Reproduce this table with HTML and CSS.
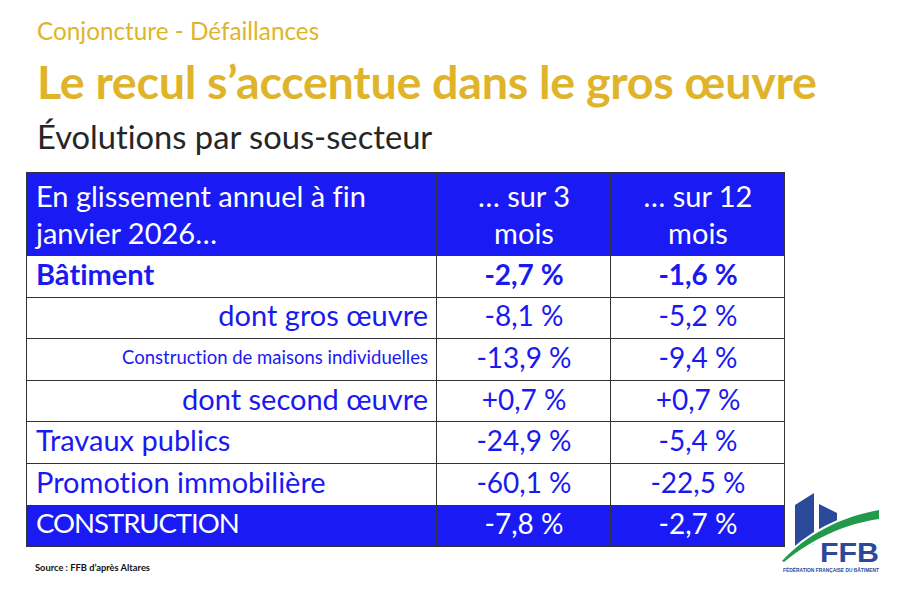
FILE: index.html
```html
<!DOCTYPE html>
<html lang="fr">
<head>
<meta charset="utf-8">
<title>Conjoncture - Défaillances</title>
<link rel="stylesheet" href="styles.css">
</head>
<body>
<div class="slide">
  <header class="head">
    <div class="kicker">Conjoncture - Défaillances</div>
    <h1 class="title">Le recul s’accentue dans le gros œuvre</h1>
    <h2 class="subtitle">Évolutions par sous-secteur</h2>
  </header>
  <table class="data">
    <colgroup>
      <col class="c1"><col class="c2"><col class="c3">
    </colgroup>
    <thead>
      <tr class="hdr">
        <th class="lab">En glissement annuel à fin janvier 2026…</th>
        <th class="num">… sur 3<br>mois</th>
        <th class="num">… sur 12<br>mois</th>
      </tr>
    </thead>
    <tbody>
      <tr class="bold">
        <td class="lab">Bâtiment</td><td class="num">-2,7 %</td><td class="num">-1,6 %</td>
      </tr>
      <tr>
        <td class="lab right">dont gros œuvre</td><td class="num">-8,1 %</td><td class="num">-5,2 %</td>
      </tr>
      <tr>
        <td class="lab right small">Construction de maisons individuelles</td><td class="num">-13,9 %</td><td class="num">-9,4 %</td>
      </tr>
      <tr>
        <td class="lab right">dont second œuvre</td><td class="num">+0,7 %</td><td class="num">+0,7 %</td>
      </tr>
      <tr>
        <td class="lab">Travaux publics</td><td class="num">-24,9 %</td><td class="num">-5,4 %</td>
      </tr>
      <tr>
        <td class="lab">Promotion immobilière</td><td class="num">-60,1 %</td><td class="num">-22,5 %</td>
      </tr>
      <tr class="total">
        <td class="lab caps">CONSTRUCTION</td><td class="num">-7,8 %</td><td class="num">-2,7 %</td>
      </tr>
    </tbody>
  </table>
  <footer class="foot">
    <div class="source">Source : FFB d’après Altares</div>
  </footer>
  <svg class="logo" width="105" height="88" viewBox="0 0 105 88" aria-label="FFB - Fédération Française du Bâtiment">
    <polygon points="15,17 34,5 34,56 15,62" fill="#2c4a9a"/>
    <polygon points="39,16 57,25 57,44 39,50" fill="#2c4a9a"/>
    <path d="M2,73 C26,47 60,29 99,22 L99,31 C63,36 31,52 4,74 Z" fill="#23994c" stroke="#ffffff" stroke-width="4" paint-order="stroke" stroke-linejoin="round"/>
    <text x="40" y="73.5" class="ffb" textLength="59" lengthAdjust="spacingAndGlyphs">FFB</text>
    <text x="3" y="83.6" class="fed" textLength="96" lengthAdjust="spacingAndGlyphs">FÉDÉRATION FRANÇAISE DU BÂTIMENT</text>
  </svg>
</div>
</body>
</html>
```
FILE: styles.css
```css
* { box-sizing: border-box; }
html, body {
  margin: 0;
  padding: 0;
  background: #ffffff;
}
body {
  font-family: Lato, "Open Sans", "Liberation Sans", sans-serif;
  font-variant-ligatures: no-common-ligatures;
  width: 912px;
  height: 593px;
  overflow: hidden;
}
.slide {
  position: relative;
  width: 912px;
  height: 593px;
  padding: 16px 0 0 26px;
}
.head {
  padding-left: 11px;
}
.kicker {
  color: #dfb42a;
  font-size: 24.3px;
  line-height: 30px;
}
.title {
  margin: 8px 0 0;
  color: #dfb42a;
  font-size: 46.7px;
  font-weight: 700;
  line-height: 54px;
  letter-spacing: -0.3px;
}
.subtitle {
  margin: 9px 0 0;
  color: #262626;
  font-size: 32.7px;
  font-weight: 400;
  line-height: 40px;
}
.data {
  margin-top: 15px;
  border-collapse: collapse;
  width: 758px;
  table-layout: fixed;
  color: #1a1af0;
  font-size: 29px;
}
.c1 { width: 410px; }
.c2 { width: 174px; }
.c3 { width: 174px; }
.data th, .data td {
  border: 1.5px solid #333333;
  padding: 0 8px 5px 9px;
  height: 41.6px;
  font-weight: 400;
  line-height: 30px;
}
.data td.num {
  font-size: 28px;
}
.hdr th {
  background: #1a1af5;
  color: #ffffff;
  height: 83px;
  line-height: 37px;
  padding-bottom: 0;
}
.lab { text-align: left; }
.num { text-align: center; }
.right { text-align: right; }
.data td.small { font-size: 18.5px; }
.data td.caps {
  font-size: 27.5px;
  letter-spacing: -1px;
}
.bold td { font-weight: 700; }
.total td {
  background: #1a1af5;
  color: #ffffff;
}
.foot {
  display: flex;
}
.source {
  margin: 15px 0 0 9px;
  font-size: 9.3px;
  line-height: 11px;
  font-weight: 700;
  color: #111111;
}
.logo {
  position: absolute;
  left: 780px;
  top: 488px;
}
.ffb {
  font-family: "Liberation Sans", Arial, sans-serif;
  font-weight: 700;
  font-size: 28px;
  fill: #2c4a9a;
}
.fed {
  font-family: "Liberation Sans", Arial, sans-serif;
  font-weight: 700;
  font-size: 5px;
  fill: #2c4a9a;
}
```
